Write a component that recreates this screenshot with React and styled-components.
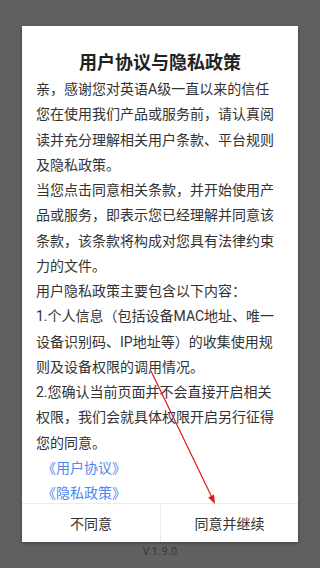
import React from "react";
import styled, { createGlobalStyle } from "styled-components";

const GlobalStyle = createGlobalStyle`
  html, body {
    margin: 0;
    padding: 0;
    background: #606060;
    font-family: Roboto, "Noto Sans CJK SC", sans-serif;
  }
`;

const Page = styled.div`
  position: relative;
  width: 320px;
  height: 568px;
  padding-top: 26px;
  box-sizing: border-box;
  display: flex;
  flex-direction: column;
  align-items: center;
  overflow: hidden;
`;

const Dialog = styled.div`
  width: 276px;
  height: 516px;
  background: #fff;
  display: flex;
  flex-direction: column;
  box-shadow: 0 1px 3px rgba(0, 0, 0, 0.35);
`;

const Content = styled.div`
  flex: 1;
  overflow: hidden;
  padding: 24px 0 0 14px;
`;

const Title = styled.h1`
  margin: 0 0 1px;
  font-size: 18px;
  line-height: 26px;
  font-weight: 700;
  color: #222;
  text-align: center;
  padding-right: 14px;
`;

const Paragraph = styled.p`
  margin: 0;
  font-size: 14px;
  line-height: 25.25px;
  color: #333;
  white-space: pre-line;
`;

const Link = styled.a`
  display: block;
  padding-left: 6px;
  font-size: 14px;
  line-height: 25.25px;
  color: #4f86ee;
  text-decoration: none;
`;

const Buttons = styled.div`
  display: grid;
  grid-template-columns: 1fr 1fr;
  height: 39px;
  border-top: 1px solid #ececec;
  box-sizing: border-box;
`;

const Button = styled.button`
  border: none;
  background: #fff;
  font-family: inherit;
  font-size: 14px;
  color: #333;
  padding: 0;
  border-left: ${(p) => (p.$divider ? "1px solid #ececec" : "none")};
`;

const Version = styled.div`
  margin-top: 3px;
  font-size: 11px;
  line-height: 14px;
  color: #3a3a3a;
  letter-spacing: 0.3px;
`;

const Arrow = styled.svg`
  position: absolute;
  left: 0;
  top: 0;
  pointer-events: none;
`;

const paragraphs = [
  "亲，感谢您对英语A级一直以来的信任",
  "您在使用我们产品或服务前，请认真阅\n读并充分理解相关用户条款、平台规则\n及隐私政策。",
  "当您点击同意相关条款，并开始使用产\n品或服务，即表示您已经理解并同意该\n条款，该条款将构成对您具有法律约束\n力的文件。",
  "用户隐私政策主要包含以下内容：",
  "1.个人信息（包括设备MAC地址、唯一\n设备识别码、IP地址等）的收集使用规\n则及设备权限的调用情况。",
  "2.您确认当前页面并不会直接开启相关\n权限，我们会就具体权限开启另行征得\n您的同意。",
];

export default function App() {
  return (
    <>
      <GlobalStyle />
      <Page>
        <Dialog>
          <Content>
            <Title>用户协议与隐私政策</Title>
            {paragraphs.map((text, index) => (
              <Paragraph key={index}>{text}</Paragraph>
            ))}
            <Link>《用户协议》</Link>
            <Link>《隐私政策》</Link>
          </Content>
          <Buttons>
            <Button>不同意</Button>
            <Button $divider>同意并继续</Button>
          </Buttons>
        </Dialog>
        <Version>V.1.9.0</Version>
        <Arrow width="320" height="568" viewBox="0 0 320 568">
          <line x1="151" y1="371" x2="211.5" y2="496.5" stroke="#e8141c" strokeWidth="1.2" />
          <polygon points="215,504 208.2,497.4 214,494.6" fill="#e8141c" />
        </Arrow>
      </Page>
    </>
  );
}
